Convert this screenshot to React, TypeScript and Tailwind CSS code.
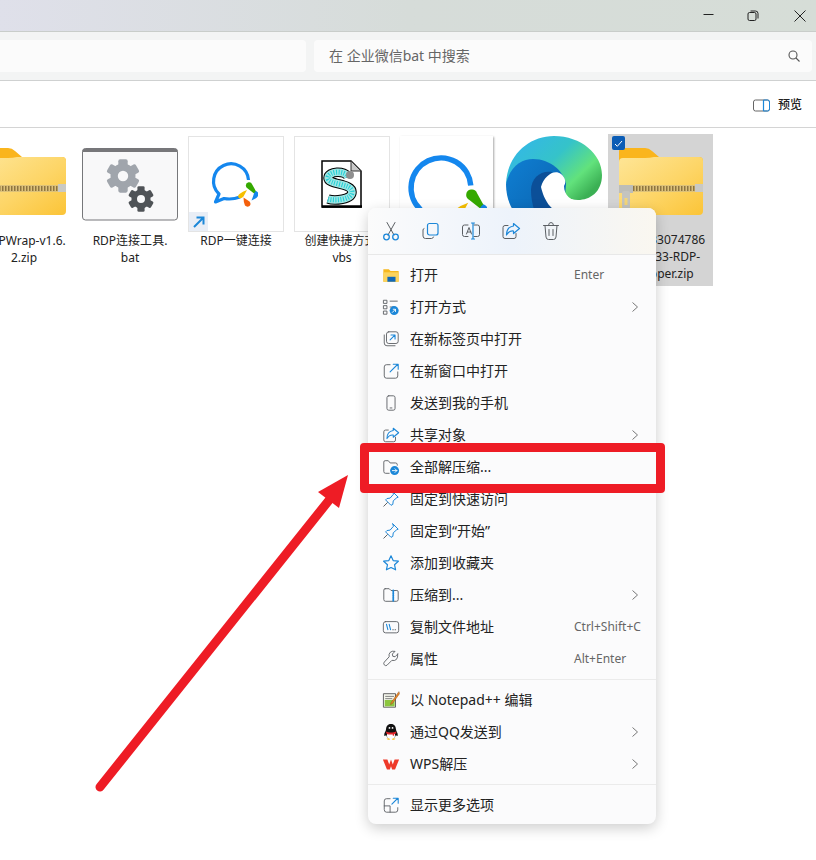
import type { ReactNode } from 'react';

const blue = '#1c87d8';
const gray = '#5b5f63';

function Ico({ children, size = 18, box = 20 }: { children: ReactNode; size?: number; box?: number }) {
  return (
    <svg width={size} height={size} viewBox={`0 0 ${box} ${box}`} fill="none" strokeLinecap="round" strokeLinejoin="round">
      {children}
    </svg>
  );
}

function FolderZip({ width, pull = false }: { width: number; pull?: boolean }) {
  const id = pull ? 'fz-a' : 'fz-b';
  return (
    <svg width={width} viewBox="0 0 84 67" className="shrink-0">
      <defs>
        <linearGradient id={id} x1="0" y1="0" x2="1" y2="1">
          <stop offset="0" stopColor="#fee596" />
          <stop offset="0.55" stopColor="#fdd566" />
          <stop offset="1" stopColor="#fbc437" />
        </linearGradient>
      </defs>
      <path d="M3 0h23q4 0 7 3l7 6h40q4 0 4 4v20H0V3q0-3 3-3z" fill="#fab51d" />
      <path d="M0 14q0-4 4-4h22q5 0 9-1l5 0h40q4 0 4 4v50q0 4-4 4H4q-4 0-4-4z" fill={`url(#${id})`} />
      <rect x="0" y="37" width="84" height="7" fill="#ddc27a" />
      <line x1="14" y1="40.500" x2="76" y2="40.500" stroke="#8d7440" strokeWidth="5" strokeDasharray="1.500 1.500" />
      <rect x="76" y="36" width="8" height="8" fill="#c9c9c4" />
      {pull && (
        <g>
          <rect x="0" y="37" width="14" height="8" fill="#bdbdb8" />
          <rect x="3" y="43" width="8" height="18" rx="2" fill="#c4c4bf" />
          <rect x="5.500" y="50" width="3" height="7" fill="#f4d678" />
        </g>
      )}
    </svg>
  );
}

function Gear({ cx, cy, r, color }: { cx: number; cy: number; r: number; color: string }) {
  return (
    <g>
      {[0, 60, 120, 180, 240, 300].map(a => (
        <rect
          key={a}
          x={cx - r * 0.36}
          y={cy - r * 1.28}
          width={r * 0.72}
          height={r * 0.7}
          rx={r * 0.14}
          fill={color}
          transform={`rotate(${a} ${cx} ${cy})`}
        />
      ))}
      <circle cx={cx} cy={cy} r={r * 0.68} fill="none" stroke={color} strokeWidth={r * 0.56} />
    </g>
  );
}

function BatTile() {
  return (
    <svg width="96" height="73" viewBox="0 0 96 73">
      <rect x="0.500" y="0.500" width="95" height="71.500" rx="3" fill="#f8f8f9" stroke="#76777a" />
      <path d="M0.500 4V3.500q0-3 3-3h89q3 0 3 3V4z" fill="#77777a" />
      <Gear cx={41} cy={28} r={13} color="#a0a5ac" />
      <Gear cx={59} cy={51} r={10} color="#4f5357" />
    </svg>
  );
}

function ChatIcon({ width }: { width: number }) {
  return (
    <svg width={width} viewBox="0 0 48 50" fill="none">
      <path
        d="M38.500 22A17.500 17.500 0 1 0 9 36L5.500 44 14 40.500Q22 42 30 39"
        stroke="#1487ee"
        strokeWidth="3.200"
        strokeLinejoin="round"
      />
      <path d="M35.800 27.500a3.300 3.300 0 0 1 6.400-1l5 9-1.500 1.200-8-6.200q-1.900-1.200-1.900-3z" fill="#35a900" />
      <path d="M46 33q3 1.500 2.500 4-1 2.500-3 3.500l-4 2 1.500-4q.5-4 3-5.500z" fill="#1487ee" />
      <path d="M37 32l-3.500 6.500q-2 2.500-4.500 1.500-2-2 .5-4 3-2.500 7.500-4z" fill="#f6bf00" />
      <path d="M33.500 39.500l6 4q2 2.500 0 4.500-2.500 1.500-4.500-.5-1.500-3-1.500-8z" fill="#f4600c" />
    </svg>
  );
}

function Edge() {
  return (
    <svg width="96" height="96" viewBox="0 0 96 96">
      <defs>
        <linearGradient id="edge-top" x1="0" y1="0" x2="1" y2="0.700">
          <stop offset="0" stopColor="#33b4f0" />
          <stop offset="0.5" stopColor="#35c3c9" />
          <stop offset="0.8" stopColor="#62e27c" />
          <stop offset="1" stopColor="#3bb054" />
        </linearGradient>
        <linearGradient id="edge-low" x1="0" y1="0" x2="1" y2="1">
          <stop offset="0" stopColor="#0f7fd3" />
          <stop offset="1" stopColor="#0a5ea8" />
        </linearGradient>
      </defs>
      <path d="M0 48C1 20 22 0 48 0C75 0 96 18 96 39C96 56 84 64 72 64C62 64 56 60 58 50C40 30 12 30 0 48z" fill="url(#edge-top)" />
      <path d="M0 48C4 30 16 23 27 23C45 23 58 36 60 48L56 96H48C20 96 0 76 0 48z" fill="url(#edge-low)" />
      <path d="M25 54C25 42 35 34 46 36L50 96H38C30 82 25 68 25 54z" fill="#0b4f98" />
      <path d="M35 51C38 40 48 33 55 38C60 42 60 47 58 50C58 60 66 66 76 65C70 72 62 76 56 76C45 76 38 64 35 51z" fill="#fff" />
    </svg>
  );
}

function VbsIcon() {
  return (
    <svg width="42" height="48" viewBox="0 0 42 48" fill="none">
      <path d="M1 1h29l10 10v36H1z" fill="#fff" stroke="#000" strokeWidth="1.500" />
      <path d="M1 46.500h40" stroke="#000" strokeWidth="2.500" />
      <path d="M30 1l10 10H30z" fill="#c9c9c9" stroke="#333" />
      <path d="M27 17c-3-7-20-6-20 1 0 7 24 5 24 14 0 8-18 9-24 7" stroke="#000" strokeWidth="9.500" />
      <path d="M27 17c-3-7-20-6-20 1 0 7 24 5 24 14 0 8-18 9-24 7" stroke="#9fe6e4" strokeWidth="7.500" />
      <path d="M27 17c-3-7-20-6-20 1 0 7 24 5 24 14 0 8-18 9-24 7" stroke="#22cfd6" strokeWidth="5" strokeDasharray="1 1.500" />
      <circle cx="29" cy="15" r="4" fill="#8f8f8f" />
    </svg>
  );
}

function Tile({ children, lines, tile = '' }: { children: ReactNode; lines: string[]; tile?: string }) {
  return (
    <div className="w-[96px] shrink-0 flex flex-col items-center">
      <div className={`w-[96px] h-[96px] flex relative ${tile}`}>{children}</div>
      <div className="w-[96px] text-center text-[12px] leading-[17px] text-[#222] whitespace-nowrap flex flex-col items-center">
        {lines.map(l => (
          <span key={l}>{l}</span>
        ))}
      </div>
    </div>
  );
}

const topIcons: ReactNode[] = [
  <Ico key="cut" size={20}>
    <path d="M6 1.500l7 12.500M14 1.500L7 14" stroke={gray} strokeWidth="1" />
    <circle cx="5.500" cy="16" r="2.800" stroke={blue} strokeWidth="1.300" />
    <circle cx="14.500" cy="16" r="2.800" stroke={blue} strokeWidth="1.300" />
  </Ico>,
  <Ico key="copy" size={20}>
    <path d="M3 7.500q-1 .2-1 1.500v6q0 2.500 2.500 2.500h6q1.500 0 2-1.500" stroke={gray} strokeWidth="1" />
    <rect x="6.500" y="2.500" width="10.500" height="11.500" rx="2" stroke={blue} strokeWidth="1.200" />
  </Ico>,
  <Ico key="rename" size={20} box={20}>
    <path d="M7 4H3.500Q1.500 4 1.500 6v7.500q0 2 2 2H7M13 4h3.500q2 0 2 2v7.500q0 2-2 2H13" stroke={gray} strokeWidth="1" />
    <path d="M5.500 13L8 6.500 10.500 13M6.500 11h3.500" stroke={gray} strokeWidth="1" />
    <path d="M12 2v16M10.500 2h3M10.500 18h3" stroke={blue} strokeWidth="1.200" />
  </Ico>,
  <Ico key="share" size={20}>
    <path d="M7 4.500H4Q2 4.500 2 6.500v9q0 2 2 2h9q2 0 2-2v-3" stroke={gray} strokeWidth="1" />
    <path d="M12.500 2.500L18.500 7.500 12.500 12.500V10Q8 9.500 5.500 14 5.500 6 12.500 5z" stroke={blue} strokeWidth="1.200" />
  </Ico>,
  <Ico key="del" size={20}>
    <path d="M2.500 4.500h15M7.500 4.500q0-3 2.500-3t2.500 3M4 4.500l1 11.500q.3 2.500 2.500 2.500h5q2.200 0 2.500-2.500l1-11.500M8 8.500v6M12 8.500v6" stroke={gray} strokeWidth="1" />
  </Ico>,
];

type Row = { icon: ReactNode; label: string; hint?: string; arrow?: boolean };

const rowsA: Row[] = [
  {
    label: '打开',
    hint: 'Enter',
    icon: (
      <Ico>
        <path d="M1.500 3.500h6l2 2h9v12h-17z" fill="#f6b81f" />
        <rect x="1.500" y="7" width="17" height="10.500" fill="#fbd35e" />
        <rect x="6" y="12" width="9" height="5.500" fill="#1168b8" />
      </Ico>
    ),
  },
  {
    label: '打开方式',
    arrow: true,
    icon: (
      <Ico>
        <path d="M2 2.500h3.500v3.500H2zM2 8.500h3.500V12H2zM2 14.500h3.500V18H2z" stroke={gray} strokeWidth="1" />
        <path d="M9 3.500h8" stroke={gray} strokeWidth="1" />
        <path d="M9 10h4" stroke={gray} strokeWidth="1" />
        <circle cx="13.500" cy="14" r="5" fill={blue} />
        <path d="M11.500 16l3.500-3.500M12.500 12.500h2.500V15" stroke="#fff" strokeWidth="1" />
      </Ico>
    ),
  },
  {
    label: '在新标签页中打开',
    icon: (
      <Ico>
        <path d="M2.500 5.500v9q0 3 3 3h9" stroke={gray} strokeWidth="1" />
        <rect x="5" y="2" width="13" height="13" rx="2.500" stroke={gray} strokeWidth="1" />
        <path d="M9 11l5-5M10 5.500h4.500V10" stroke={blue} strokeWidth="1.200" />
      </Ico>
    ),
  },
  {
    label: '在新窗口中打开',
    icon: (
      <Ico>
        <path d="M9 3H5Q2.500 3 2.500 5.500v10Q2.500 18 5 18h10q2.500 0 2.500-2.500V11" stroke={gray} strokeWidth="1" />
        <path d="M9 11l8.500-8.500M12.500 2.500h5.500V8" stroke={blue} strokeWidth="1.200" />
      </Ico>
    ),
  },
  {
    label: '发送到我的手机',
    icon: (
      <Ico>
        <rect x="5.500" y="2" width="9" height="16" rx="2" stroke={gray} strokeWidth="1" />
        <path d="M9 15.500h2" stroke={gray} strokeWidth="1" />
      </Ico>
    ),
  },
  {
    label: '共享对象',
    arrow: true,
    icon: (
      <Ico>
        <path d="M7 4.500H4Q2 4.500 2 6.500v9q0 2 2 2h9q2 0 2-2v-3" stroke={gray} strokeWidth="1" />
        <path d="M12.500 2.500L18.500 7.500 12.500 12.500V10Q8 9.500 5.500 14 5.500 6 12.500 5z" stroke={blue} strokeWidth="1.200" />
      </Ico>
    ),
  },
  {
    label: '全部解压缩...',
    icon: (
      <Ico>
        <path d="M8 17H4Q2 17 2 15V4.500Q2 3 3.500 3H7l2 2.500h6q2 0 2 2V8" stroke={gray} strokeWidth="1" />
        <circle cx="14" cy="14" r="5" fill={blue} />
        <path d="M11.500 14h5M14.500 12l2 2-2 2" stroke="#fff" strokeWidth="1" />
      </Ico>
    ),
  },
  {
    label: '固定到快速访问',
    icon: (
      <Ico>
        <path d="M12 2l6 6-1.500.5-4 3.500-.5 4-2 1-6-6 1.500-1.500 3.500-.5 3.500-4z" stroke={blue} strokeWidth="1.100" />
        <path d="M6 14l-4 4" stroke={gray} strokeWidth="1.100" />
      </Ico>
    ),
  },
  {
    label: '固定到“开始”',
    icon: (
      <Ico>
        <path d="M12 2l6 6-1.500.5-4 3.500-.5 4-2 1-6-6 1.500-1.500 3.500-.5 3.500-4z" stroke={blue} strokeWidth="1.100" />
        <path d="M6 14l-4 4" stroke={gray} strokeWidth="1.100" />
      </Ico>
    ),
  },
  {
    label: '添加到收藏夹',
    icon: (
      <Ico>
        <path d="M10 2l2.400 5.300 5.800.7-4.300 3.900 1.200 5.700L10 15l-5.100 2.600 1.200-5.700L1.800 8l5.800-.7z" stroke={blue} strokeWidth="1.300" />
      </Ico>
    ),
  },
  {
    label: '压缩到...',
    arrow: true,
    icon: (
      <Ico>
        <path d="M3.500 3H8l2 2h6.500Q18 5 18 6.500V15q0 2-2 2H4q-2 0-2-2V4.500Q2 3 3.500 3z" stroke={gray} strokeWidth="1" />
        <path d="M12.500 5v12" stroke={blue} strokeWidth="2" strokeDasharray="1.500 1" />
      </Ico>
    ),
  },
  {
    label: '复制文件地址',
    hint: 'Ctrl+Shift+C',
    icon: (
      <Ico>
        <rect x="1.500" y="4" width="17" height="12.500" rx="2.500" stroke={gray} strokeWidth="1" />
        <path d="M5 7l1.500 6M8 7l1.500 6" stroke={blue} strokeWidth="1.200" />
        <path d="M12 13h.5M14.500 13h.5" stroke={gray} strokeWidth="1.200" />
      </Ico>
    ),
  },
  {
    label: '属性',
    hint: 'Alt+Enter',
    icon: (
      <Ico>
        <path d="M17.500 4.500l-3 3-2.500-.5-.5-2.500 3-3q-3.500-.8-5.500 1.200-1.800 2-1 4.800L2.500 13.500q-1.200 1.500 0 3 1.500 1.500 3 .5l5.500-5.500q3 .8 5-1 1.800-2 1.500-6z" stroke={gray} strokeWidth="1" />
      </Ico>
    ),
  },
];

const rowsB: Row[] = [
  {
    label: '以 Notepad++ 编辑',
    icon: (
      <Ico>
        <rect x="2" y="3" width="13" height="15" fill="#f4f6ec" stroke="#555" strokeWidth="1" />
        <rect x="3" y="10" width="11" height="7" fill="#8cc63f" />
        <path d="M4 6h9M4 8.500h7" stroke="#777" strokeWidth="1" />
        <path d="M18.500 1L10 13l-.5 2 2-1L19.500 3z" fill="#e8862a" stroke="#8a4b12" strokeWidth="0.500" />
      </Ico>
    ),
  },
  {
    label: '通过QQ发送到',
    arrow: true,
    icon: (
      <Ico>
        <path d="M10 1c-4 0-5.500 3-5.500 6 0 2-2.500 4.500-2 7 .5 1 1.500 0 2-1 .5 2 1.500 3 2 3.500h7c.5-.5 1.500-1.500 2-3.500.5 1 1.500 2 2 1 .5-2.500-2-5-2-7 0-3-1.500-6-5.500-6z" fill="#111" />
        <path d="M6 11c2 1 6 1 8 0 1 3 .5 5-1 6H7c-1.500-1-2-3-1-6z" fill="#fff" />
        <path d="M4.500 9.500c3 1.500 8 1.500 11 0l.5 1.500c-1 .8-2 1-2.500 1.200v2h-1.500v-1.500c-2 .3-4 .3-6-.2C5 12 4.500 11 4.500 9.500z" fill="#e3252b" />
        <path d="M5 17.500q2.500-1.500 4 .5-2 1.500-4-.5zM15 17.500q-2.500-1.500-4 .5 2 1.500 4-.5z" fill="#f5b91d" />
        <circle cx="8.300" cy="5.500" r="1" fill="#fff" />
        <circle cx="11.700" cy="5.500" r="1" fill="#fff" />
      </Ico>
    ),
  },
  {
    label: 'WPS解压',
    arrow: true,
    icon: (
      <Ico size={20}>
        <path d="M1 5h5l2 5.500L10 5l2 5.500L14 5h5l-4.500 11h-3.200L10 12.500 8.700 16H5.500z" fill="#ee3a2a" />
      </Ico>
    ),
  },
];

function MenuRow({ row }: { row: Row }) {
  return (
    <div className="h-8 flex items-center pl-[14px] text-[14px] text-[#222]">
      <span className="w-[18px] h-[18px] mr-[10px] shrink-0 flex items-center justify-center">{row.icon}</span>
      <span className="flex-1 whitespace-nowrap pb-[2px]">{row.label}</span>
      {row.hint && <span className="w-[66px] mr-[16px] text-[12px] text-[#666] whitespace-nowrap">{row.hint}</span>}
      {row.arrow && (
        <svg width="8" height="12" viewBox="0 0 8 12" fill="none" className="mr-[17px]">
          <path d="M1.500 1.500L6.500 6l-5 4.500" stroke="#777" strokeWidth="1" />
        </svg>
      )}
    </div>
  );
}

function ContextMenu() {
  return (
    <div className="absolute left-[368px] top-[208px] w-[288px] h-[616px] rounded-[8px] bg-[#fbfbfc] shadow-[0_4px_14px_rgba(0,0,0,0.2)] overflow-hidden">
      <div className="h-[47px] flex items-center pl-[13px] gap-[20px] border-b border-[#e8e8e8] bg-gradient-to-r from-[#fbfbfb] via-[#edf3fb] to-[#faf7f0]">
        {topIcons}
      </div>
      <div className="pt-[4px] pb-[4px] border-b border-[#ebebeb]">
        {rowsA.map(r => (
          <MenuRow key={r.label} row={r} />
        ))}
      </div>
      <div className="pt-[4px] pb-[4px] border-b border-[#ebebeb]">
        {rowsB.map(r => (
          <MenuRow key={r.label} row={r} />
        ))}
      </div>
      <div className="pt-[4px]">
        <MenuRow
          row={{
            label: '显示更多选项',
            icon: (
              <Ico>
                <path d="M9 3H5Q2.500 3 2.500 5.500V15Q2.500 18 5 18h10q2.500 0 2.500-2.500V13M2.500 11H9v7" stroke={gray} strokeWidth="1" />
                <path d="M11 9l6.500-6.500M12.500 2.500H18V8" stroke={blue} strokeWidth="1.200" />
              </Ico>
            ),
          }}
        />
      </div>
    </div>
  );
}

export default function App() {
  return (
    <div className="relative w-[816px] h-[860px] bg-white overflow-hidden font-['Noto_Sans','Noto_Sans_CJK_SC',sans-serif]">
      {/* title bar */}
      <div className="h-[32px] border-b border-[#c9cdca] bg-gradient-to-r from-[#dfe0ea] via-[#d6dcd9] to-[#d6ddd7] flex justify-end items-center">
        <svg width="12" height="12" viewBox="0 0 12 12" fill="none" className="mr-[33px]">
          <path d="M1.500 4.500h10" stroke="#222" strokeWidth="1" />
        </svg>
        <svg width="12" height="12" viewBox="0 0 12 12" fill="none" className="mr-[34px]">
          <rect x="1" y="2.500" width="8" height="8" rx="1.500" stroke="#222" strokeWidth="1" />
          <path d="M3.500 1h5q2.500 0 2.500 2.500v5" stroke="#222" strokeWidth="1" />
        </svg>
        <svg width="14" height="14" viewBox="0 0 14 14" fill="none" className="mr-[9px]">
          <path d="M1.500 1.500l11 11M12.500 1.500l-11 11" stroke="#222" strokeWidth="1" />
        </svg>
      </div>

      {/* address bar */}
      <div className="h-[49px] bg-[#f3f4f4] border-b border-[#cfd1d1] flex items-center gap-[8px] pr-[4px]">
        <div className="w-[306px] h-[32px] bg-[#fbfbfb] rounded-r-[4px]" />
        <div className="flex-1 h-[32px] bg-[#fbfbfb] rounded-[4px] flex items-center pl-[15px] pr-[11px] text-[14px] text-[#666]">
          <span className="flex-1 pb-[2px]">在 企业微信bat 中搜索</span>
          <svg width="14" height="14" viewBox="0 0 14 14" fill="none">
            <circle cx="6" cy="6" r="4" stroke="#555" strokeWidth="1.100" />
            <path d="M9 9l3.500 3.500" stroke="#555" strokeWidth="1.100" />
          </svg>
        </div>
      </div>

      {/* toolbar */}
      <div className="h-[47px] pt-[2px] border-b border-[#d4d4d4] flex items-center justify-end pr-[14px] text-[12px] font-medium text-[#222]">
        <svg width="17" height="13" viewBox="0 0 17 13" fill="none" className="mr-[8px]">
          <rect x="0.500" y="1" width="16" height="11" rx="2" stroke="#666" strokeWidth="1" />
          <path d="M10.500 1v11" stroke={blue} strokeWidth="1.200" />
          <path d="M10.500 1h4q2 0 2 2v7q0 2-2 2h-4" stroke={blue} strokeWidth="1" />
        </svg>
        预览
      </div>

      {/* file grid */}
      <div className="flex gap-[10px] ml-[-24px] pt-[8px]">
        <Tile lines={['RDPWrap-v1.6.', '2.zip']}>
          <div className="mt-[12px] ml-[6px]">
            <FolderZip width={84} />
          </div>
        </Tile>
        <Tile lines={['RDP连接工具.', 'bat']} tile="items-center">
          <BatTile />
        </Tile>
        <Tile lines={['RDP一键连接']} tile="border border-[#e4e4e4]">
          <div className="ml-[21px] mt-[21px]">
            <ChatIcon width={48} />
          </div>
          <div className="absolute left-0 bottom-0 w-[19px] h-[19px] bg-[#e9eef6] flex items-center justify-center">
            <svg width="14" height="14" viewBox="0 0 14 14" fill="none">
              <path d="M2 12L11 3M4.500 2.500h7v7" stroke="#1c87d8" strokeWidth="2" />
            </svg>
          </div>
        </Tile>
        <Tile lines={['创建快捷方式.', 'vbs']} tile="border border-[#e4e4e4] items-center justify-center">
          <VbsIcon />
        </Tile>
        <Tile lines={[]} tile="w-[93px]! self-start bg-white shadow-[1px_1px_2px_rgba(0,0,0,0.35)]">
          <div className="ml-[5px] mt-[12px]">
            <ChatIcon width={82} />
          </div>
        </Tile>
        <Tile lines={[]}>
          <Edge />
        </Tile>
      </div>

      {/* selected tile */}
      <div className="absolute left-[608px] top-[134px] w-[105px] h-[152px] bg-[#d4d4d4] flex flex-col items-center">
        <div className="absolute left-[4px] top-[2px] w-[13px] h-[14px] rounded-[2px] bg-[#0b5cb5] flex items-center justify-center">
          <svg width="9" height="9" viewBox="0 0 9 9" fill="none">
            <path d="M1 5l2.300 2.300L8 2" stroke="#fff" strokeWidth="1" />
          </svg>
        </div>
        <div className="mt-[14px] h-[67px]">
          <FolderZip width={84} pull />
        </div>
        <div className="mt-[16px] text-[12px] leading-[17px] text-[#222] text-center flex flex-col items-center whitespace-nowrap">
          <span>1700133074786</span>
          <span>1713733-RDP-</span>
          <span>Wrapper.zip</span>
        </div>
      </div>

      <ContextMenu />

      {/* red annotation */}
      <div className="absolute left-[360px] top-[443px] w-[305px] h-[50px] border-[9px] border-[#ee1c25] rounded-[4px]" />
      <svg className="absolute left-0 top-0 pointer-events-none" width="816" height="860" viewBox="0 0 816 860" fill="none">
        <path d="M100 787L330 499" stroke="#ee1c25" strokeWidth="9" strokeLinecap="round" />
        <path d="M348 475L318 492L339 508z" fill="#ee1c25" />
      </svg>
    </div>
  );
}
